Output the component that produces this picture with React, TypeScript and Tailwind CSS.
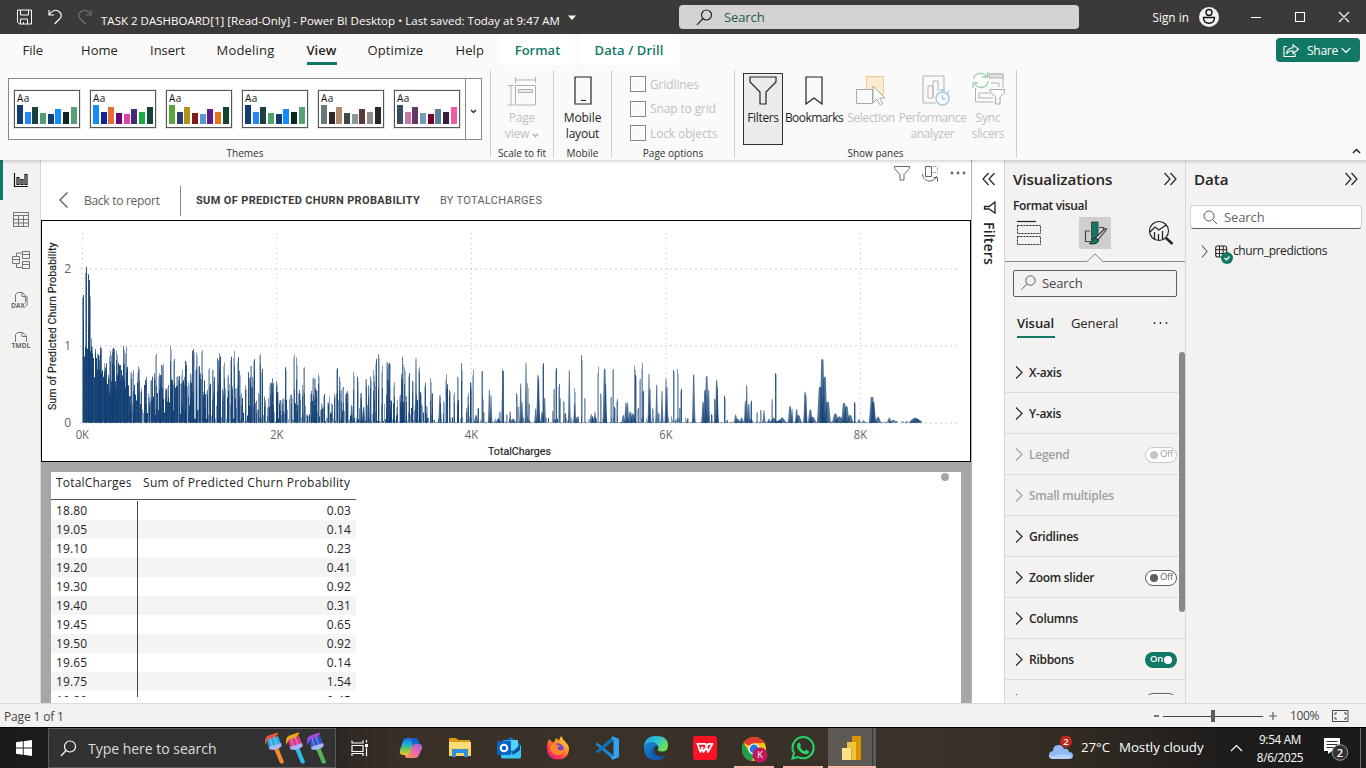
import type { ReactNode } from 'react';

const INK = '#252423';

type IconProps = { w: number; h: number; box?: string; children: ReactNode; className?: string };
function Svg({ w, h, box, children, className = '' }: IconProps) {
  return (
    <svg width={w} height={h} viewBox={box ?? `0 0 ${w} ${h}`} fill="none" className={`block shrink-0 ${className}`}>
      {children}
    </svg>
  );
}

/* ---------- Title bar ---------- */

function TitleBar() {
  return (
    <header className="flex h-[34px] shrink-0 items-center bg-[#3b3a39] text-white">
      <Svg w={80} h={20} className="ml-4">
        <path d="M1.500 3h14v14h-12l-2-2zM4.500 3v5h8V3M4.500 17v-5h7v5M7.500 15v2" stroke="#fff" />
        <path d="M33 3v5h5M33.300 7.500C36 3 40.500 2 43.500 5c2 2 2.300 4.500.5 6.500L38.500 17" stroke="#fff" strokeWidth="1.100" />
        <path d="M75 3v5h-5M74.700 7.500C72 3 67.500 2 64.500 5c-2 2-2.300 4.500-.5 6.500L69.500 17" stroke="#777574" strokeWidth="1.100" />
      </Svg>
      <div className="ml-[5px] w-[460px] whitespace-nowrap pt-[7px] text-[11.500px] leading-4 tracking-[0.010px]">
        TASK 2 DASHBOARD[1] [Read-Only] - Power BI Desktop • Last saved: Today at 9:47 AM
      </div>
      <Svg w={10} h={6} className="ml-[6px] mt-0.5"><path d="M1 .5h8L5 5z" fill="#fff" /></Svg>
      <div className="ml-[102px] flex h-6 w-[400px] items-center rounded-sm bg-[#d4d3d1] text-[#1d5c4d]">
        <Svg w={17} h={17} className="ml-[17px]">
          <circle cx="10.500" cy="6" r="5" stroke="#252423" strokeWidth="1.200" />
          <path d="M7 9.500L1 15.800" stroke="#252423" strokeWidth="1.200" />
        </Svg>
        <span className="ml-[11px] mt-px text-[13px] tracking-[-0.100px]">Search</span>
      </div>
      <span className="ml-[73.500px] mt-px w-[37px] whitespace-nowrap text-[11.700px] tracking-[0.050px]">Sign in</span>
      <Svg w={20} h={20} className="ml-[9.500px]">
        <circle cx="10" cy="10" r="10" fill="#f3f2f1" />
        <circle cx="10" cy="5.500" r="3" stroke="#111" strokeWidth="1.400" />
        <path d="M4.500 10.500h11c0 4-2.500 5.800-5.500 5.800s-5.500-1.800-5.500-5.800z" stroke="#111" strokeWidth="1.400" />
      </Svg>
      <Svg w={100} h={12} className="ml-[31px]">
        <path d="M1 6.500h10M45.500 1.500h9v9h-9zM89 1l10 10M99 1L89 11" stroke="#fff" strokeWidth="1.100" />
      </Svg>
    </header>
  );
}

/* ---------- Menu tabs ---------- */

function MenuTabs() {
  return (
    <nav className="flex h-9 shrink-0 items-start text-[13px] leading-[32px] text-[#252423]">
      <span className="ml-[22.500px] w-[58.500px]">File</span>
      <span className="w-[69px] tracking-[0.050px]">Home</span>
      <span className="w-[66.500px]">Insert</span>
      <span className="w-[90px] tracking-[0.200px]">Modeling</span>
      <span className="relative w-[61px] font-semibold">
        View
        <i className="absolute bottom-[1px] left-0 h-[3px] w-[30px] bg-[#117865]" />
      </span>
      <span className="w-[88px] tracking-[0.140px]">Optimize</span>
      <span className="w-[44.500px] tracking-[0.100px]">Help</span>
      <span className="h-[31px] w-[75px] bg-white text-center font-semibold text-[#117865]">Format</span>
      <span className="ml-1 h-[31px] w-[100px] bg-white text-center font-semibold tracking-[0.100px] text-[#117865]">Data / Drill</span>
      <div className="ml-auto mr-[6px] mt-[4px] flex h-6 w-[84px] items-center rounded bg-[#117865] pl-[7px] text-white">
        <Svg w={17} h={15}>
          <path d="M4 3.500H1v10h11v-3" stroke="#fff" strokeWidth="1.100" />
          <path d="M3.500 11C4 7 6.500 5 10 4.800V1.800l5.500 4.400-5.500 4.300V7.800C7 7.700 5 8.700 3.500 11z" stroke="#fff" strokeWidth="1.100" />
        </Svg>
        <span className="ml-[7px] mt-px w-[31px] text-[12px] tracking-[-0.250px]">Share</span>
        <Svg w={10} h={7} className="ml-[3px]"><path d="M.7 1l4.300 4.500L9.300 1" stroke="#fff" strokeWidth="1.200" /></Svg>
      </div>
    </nav>
  );
}

/* ---------- Ribbon ---------- */

const tallFirst = [19, 12, 17, 11, 10, 15, 12, 17];
const themes: { colors: string[]; heights: number[] }[] = [
  { colors: ['#123d6f', '#2487ff', '#1c403e', '#4fa06e', '#123d6f', '#118dff', '#0c2622', '#55a375'], heights: tallFirst },
  { colors: ['#118dff', '#12239e', '#e66c37', '#6b007b', '#e044a7', '#4a2b78', '#1aab40', '#15443f'], heights: tallFirst },
  { colors: ['#5ba63b', '#2e3d70', '#b1921e', '#7c1b24', '#5b93d3', '#611b8b', '#e6711b', '#17452c'], heights: tallFirst },
  { colors: ['#123d6f', '#2487ff', '#1c403e', '#4fa06e', '#123d6f', '#118dff', '#0c2622', '#55a375'], heights: tallFirst },
  { colors: ['#6a787c', '#332725', '#b08b70', '#3f4848', '#8b9697', '#573b34', '#918c85', '#242827'], heights: tallFirst },
  { colors: ['#354d5e', '#c47ba4', '#68356a', '#7599b7', '#74002e', '#5b809c', '#37203f', '#ed5ca7'], heights: tallFirst },
];

function ThemeCard({ colors, heights }: { colors: string[]; heights: number[] }) {
  return (
    <div className="flex h-[38px] w-[66px] flex-col justify-between border border-[#555] bg-white px-[2px] pb-[3px] shadow-[0_0_0_1px_#e5e5e5]">
      <span className="h-[14px] text-[10px] leading-[15px] tracking-[0.500px] text-[#111]">Aa</span>
      <div className="flex items-end gap-[1.700px]">
        {colors.map((c, i) => (
          <i key={i} className="w-[6px]" style={{ backgroundColor: c, height: heights[i] }} />
        ))}
      </div>
    </div>
  );
}

function RibbonGroup({ label, className, children }: { label: string; className: string; children: ReactNode }) {
  return (
    <section className={`flex h-[88px] flex-col border-r border-[#d2d0ce] ${className}`}>
      <div className="flex h-[76px] shrink-0">{children}</div>
      <div className="h-3 shrink-0 whitespace-nowrap text-center text-[10px] leading-[15px] text-[#323130]">{label}</div>
    </section>
  );
}

function BigButton({ icon, lines, className, muted }: { icon: ReactNode; lines: ReactNode; className: string; muted?: boolean }) {
  return (
    <div className={`flex shrink-0 flex-col items-center whitespace-nowrap text-center text-[12px] leading-4 ${muted ? 'text-[#c2c0be]' : 'text-[#252423]'} ${className}`}>
      <div className="flex h-8 items-center">{icon}</div>
      <div className="mt-[5px] flex flex-col items-center">{lines}</div>
    </div>
  );
}

function CheckRow({ children }: { children: ReactNode }) {
  return (
    <div className="flex h-4 items-center gap-1 whitespace-nowrap text-[12px] tracking-[-0.120px] text-[#c2c0be]">
      <i className="size-4 border border-[#8a8886] bg-[#fafafa]" />
      <span className="mt-px">{children}</span>
    </div>
  );
}

function Ribbon() {
  return (
    <div className="flex h-[90px] shrink-0">
      <RibbonGroup label="Themes" className="w-[491px]">
        <div className="ml-2 mt-2 flex h-[62px] w-[474px] border border-[#8a8886] bg-white">
          <div className="flex w-[457px] items-center gap-[10px] border-r border-[#8a8886] pl-[5px]">
            {themes.map((t, i) => <ThemeCard key={i} {...t} />)}
          </div>
          <div className="flex flex-1 items-center justify-center">
            <Svg w={7} h={5} className="mt-1"><path d="M1 1l2.500 2.500L6 1" stroke="#323130" strokeWidth="1.500" /></Svg>
          </div>
        </div>
      </RibbonGroup>
      <RibbonGroup label="Scale to fit" className="w-[63px]">
        <BigButton
          muted
          className="w-[62px] pt-[4px]"
          icon={
            <Svg w={30} h={32}>
              <path d="M8.500 3v6M28.500 3v6M8.500 6h20M1 11.500h6M1 31h6M4 12v19M8.500 11.500h20V31h-20z" stroke="#b3b1af" />
              <path d="M11.500 15.500h14v3h-14z" stroke="#b3b1af" fill="#ececec" />
            </Svg>
          }
          lines={<><span className="-mt-px tracking-[-0.200px]">Page</span><span className="flex items-center gap-[3px] tracking-[-0.200px]">view <Svg w={7} h={5} className="mt-0.5"><path d="M1 1l2.500 2.500L6 1" stroke="#aaa" strokeWidth="1.500" /></Svg></span></>}
        />
      </RibbonGroup>
      <RibbonGroup label="Mobile" className="w-[58px]">
        <BigButton
          className="w-[57px] pt-[4px]"
          icon={<Svg w={18} h={29}><path d="M1 1h16v27H1zM7 24.500h5" stroke={INK} strokeWidth="1.200" /></Svg>}
          lines={<><span className="-mt-px tracking-[-0.100px]">Mobile</span><span className="tracking-[-0.200px]">layout</span></>}
        />
      </RibbonGroup>
      <RibbonGroup label="Page options" className="w-[123px]">
        <div className="ml-[18px] mt-[6px] flex flex-col gap-[8.700px]">
          <CheckRow>Gridlines</CheckRow>
          <CheckRow>Snap to grid</CheckRow>
          <CheckRow>Lock objects</CheckRow>
        </div>
      </RibbonGroup>
      <RibbonGroup label="Show panes" className="w-[282px]">
        <BigButton
          className="ml-2 mt-[3px] h-[72px] w-10 border border-[#323130] bg-[#ebebeb]"
          icon={<Svg w={28} h={29}><path d="M1 1h26v5L17 16v12h-6V16L1 6z" stroke={INK} strokeWidth="1.200" /></Svg>}
          lines={<span className="-mt-px tracking-[-0.350px]">Filters</span>}
        />
        <BigButton
          className="w-[62px] pt-[4px]"
          icon={<Svg w={18} h={29}><path d="M1 1h16v27l-8-6-8 6z" stroke={INK} strokeWidth="1.200" /></Svg>}
          lines={<span className="-mt-px tracking-[-0.550px]">Bookmarks</span>}
        />
        <BigButton
          muted
          className="w-[52px] pt-[4px]"
          icon={
            <Svg w={30} h={32}>
              <path d="M10.500 2.500h17v18h-17z" fill="#fbecd0" stroke="#f0c898" />
              <path d="M.5 15.500h16v14H.5z" fill="#fafafa" stroke="#a9a9a9" />
              <path d="M17 12v17l4-4 3 6 2.500-1.500L23.500 24H29z" fill="#fff" stroke="#a9a9a9" />
            </Svg>
          }
          lines={<span className="-mt-px tracking-[-0.350px]">Selection</span>}
        />
        <BigButton
          muted
          className="w-[71px] pt-[4px]"
          icon={
            <Svg w={28} h={32} className="ml-1.5">
              <path d="M14 29H1V2h21v14M6 24V12h5v12zM11 24V7h5v10" stroke="#b3b1af" />
              <circle cx="20.500" cy="24.500" r="6.500" stroke="#a3cbe5" strokeWidth="1.500" fill="#fafafa" />
              <path d="M20.500 18v-2M18 16h5M20.500 21v4h3M25.500 19l1.500-2" stroke="#a3cbe5" strokeWidth="1.300" />
            </Svg>
          }
          lines={<><span className="-mt-px tracking-[-0.450px]">Performance</span><span className="tracking-[-0.350px]">analyzer</span></>}
        />
        <BigButton
          muted
          className="w-[40px] pt-[4px]"
          icon={
            <Svg w={33} h={34} className="-mt-1">
              <path d="M3.500 17v14h18M17 3h14v14M7 22h11M7 27h14M7 22v5M19 12h8v4" stroke="#b3b1af" />
              <path d="M17 3h14v4H17z" fill="#e1e1e1" stroke="#b3b1af" />
              <path d="M1.500 8a7 7 0 0 1 13-2M16 10A7 7 0 0 1 3 13M15.500 1v5h-5M1 17v-5h5" stroke="#9ccfaa" strokeWidth="1.300" />
              <path d="M18.500 18.500h14v3L28 26v7h-4.500v-7l-5-4.500z" fill="#fafafa" stroke="#a9a9a9" />
            </Svg>
          }
          lines={<><span className="-mt-px tracking-[-0.200px]">Sync</span><span className="tracking-[-0.350px]">slicers</span></>}
        />
      </RibbonGroup>
      <Svg w={9} h={6} className="ml-auto mr-[5px] mt-[78px]"><path d="M1 5l3.500-3.500L8 5" stroke="#252423" strokeWidth="1.500" /></Svg>
    </div>
  );
}

/* ---------- View rail ---------- */

function Rail() {
  return (
    <aside className="flex w-[41px] shrink-0 border-r border-[#d8d6d4] bg-[#f3f2f1]">
      <i className="h-10 w-[3px] bg-[#117865]" />
      <Svg w={37} h={200} box="3 160 37 200">
        <path d="M14.500 173v13.500H28" stroke="#111" strokeWidth="1.200" />
        <path d="M17 177.500h2v7h-2zM21 179.500h2v5h-2zM25 174.500h2v10h-2z" stroke="#111" strokeWidth="1.200" />
        <g stroke="#777573">
          <path d="M13.500 212.500h15v14h-15zM13.500 215.500h15M13.500 219.500h15M13.500 223h15M18.500 215v11.500M23.500 215v11.500" />
          <path d="M12.500 256.500h7v7h-7zM12.500 259.500h7M22.500 251.500h7v7h-7zM22.500 254.500h7M22.500 261.500h7v7h-7zM22.500 264.500h7M16.500 256v-3h6M16.500 264v3.500h6" />
          <path d="M15.500 302v-7.500l2-2h5l3 3.500v7M22 293v3.500h3.500M27 296v9l-2 2h-3" />
          <path d="M15.500 342v-7.500l2-2h5l4 3.500v6M22 333v3.500h4" />
        </g>
        <text x="11" y="308" fontSize="7" fontWeight="700" fill="#6a6866" stroke="#f3f2f1" strokeWidth="1.500" paintOrder="stroke" textLength="14">DAX</text>
        <text x="11.500" y="347.500" fontSize="7" fontWeight="700" fill="#6a6866" stroke="#f3f2f1" strokeWidth="1.500" paintOrder="stroke" textLength="19">TMDL</text>
      </Svg>
    </aside>
  );
}

/* ---------- Chart ---------- */

/* Peaks are [x, y] or [x, y, half width]; three units make one CSS pixel and the baseline is y = 788. */
type Peak = [number, number, number?];
const BASE = 788;
const peaks: Peak[] = [
  [251, 405], [260, 320], [266, 343], [268, 360], [273, 535], [278, 620], [285, 567], [292, 580], [296, 590], [301, 562], [304, 565], [313, 610], [316, 622], [320, 610],
  [325, 645], [331, 572], [337, 575], [340, 563], [343, 567], [348, 572], [352, 642], [361, 615], [369, 558], [373, 610], [380, 560], [383, 620], [390, 707],
  [395, 635], [400, 630], [404, 700], [415, 620], [419, 628], [425, 685], [436, 660], [440, 650], [447, 710], [453, 660], [458, 650], [462, 640],
  [468, 580], [477, 640], [480, 645], [485, 614], [489, 612], [495, 685], [500, 690], [506, 675], [511, 558], [514, 655], [518, 660], [523, 597], [524, 670], [533, 648],
  [538, 648], [543, 670], [548, 630], [552, 650], [557, 603], [560, 615], [566, 665], [571, 640], [577, 572], [580, 567], [588, 578], [589, 620], [597, 618], [602, 640],
  [606, 570], [610, 695], [616, 703], [622, 690], [628, 625], [636, 630], [642, 652], [652, 595], [656, 600], [659, 580], [662, 590], [668, 688], [672, 607], [684, 645],
  [693, 590], [696, 688], [702, 573], [705, 685], [714, 592], [717, 632], [723, 700], [735, 677], [745, 637], [750, 652], [754, 617], [758, 650], [763, 598],
  [769, 722], [776, 700], [781, 583], [787, 627], [792, 710], [803, 742], [810, 667], [815, 670], [818, 655], [821, 670], [829, 662], [832, 696], [840, 720], [846, 718], [850, 715],
  [855, 622], [875, 705], [883, 583], [890, 592], [893, 735], [899, 690], [908, 675], [912, 622], [921, 768], [934, 693], [940, 652], [943, 655], [947, 685], [950, 690], [954, 642],
  [965, 730], [974, 702], [985, 728], [993, 730], [1003, 700], [1011, 625], [1019, 650], [1025, 690], [1030, 680], [1040, 698], [1043, 693],
  [1060, 635], [1055, 735, 4], [1073, 650], [1083, 697, 4], [1091, 740, 4], [1100, 657], [1106, 675, 3], [1112, 650], [1119, 630], [1124, 665], [1129, 597], [1134, 583], [1147, 617], [1162, 607],
  [1169, 609], [1165, 613], [1172, 720], [1184, 667], [1180, 730], [1158, 705], [1191, 740], [1200, 705], [1205, 640, 3], [1208, 590], [1213, 622], [1220, 708], [1228, 640], [1237, 663], [1248, 594, 3], [1257, 622],
  [1261, 695], [1276, 668], [1280, 738], [1292, 655], [1297, 700], [1320, 705, 4], [1329, 723], [1338, 643], [1343, 673], [1347, 690], [1364, 697], [1371, 650], [1375, 720], [1385, 610], [1399, 745], [1404, 700], [1411, 667],
  [1412, 680], [1420, 630], [1428, 765, 5], [1435, 745], [1446, 633], [1446, 710], [1451, 755], [1468, 688, 3], [1473, 705, 3], [1495, 775, 6], [1499, 755], [1508, 627, 3], [1510, 633], [1520, 763], [1531, 755], [1540, 775, 6], [1549, 700], [1555, 740], [1562, 670, 3],
  [1566, 725, 3], [1578, 607, 3], [1583, 670], [1587, 730], [1607, 745, 3], [1614, 645, 4], [1616, 655, 3], [1626, 755, 4], [1631, 610], [1634, 712, 3], [1656, 752], [1664, 687], [1668, 623], [1678, 672], [1681, 715], [1690, 722], [1697, 760],
  [1708, 630, 3], [1722, 685], [1724, 730, 3], [1732, 770, 4], [1743, 586], [1752, 714], [1773, 763], [1778, 768, 4], [1785, 755, 3], [1796, 620], [1801, 700], [1814, 625, 5], [1817, 670, 3], [1835, 710], [1839, 627], [1844, 740], [1853, 718],
  [1870, 765, 4], [1878, 727, 4], [1883, 727, 3], [1891, 755, 6], [1899, 760, 6], [1903, 617], [1906, 645], [1915, 743], [1922, 657], [1927, 610], [1930, 693], [1947, 640, 3], [1950, 685, 3], [1957, 745], [1970, 673, 3], [1974, 760], [1986, 692, 3],
  [1998, 655, 3], [2001, 680, 3], [2019, 630], [2031, 627], [2038, 743], [2044, 687], [2062, 775], [2081, 643, 4], [2061, 780],
  [2109, 725, 4], [2115, 690, 5], [2120, 648, 5], [2126, 688, 3], [2134, 763], [2143, 717], [2150, 660, 4], [2152, 680, 3], [2172, 707], [2181, 780], [2207, 763, 4], [2213, 775, 6], [2225, 772, 5], [2240, 675, 3], [2236, 723, 3], [2246, 732, 4],
  [2255, 722, 2], [2253, 775, 5], [2271, 757], [2280, 750], [2292, 750, 3], [2307, 775, 4], [2318, 717, 2], [2321, 773, 8], [2326, 640, 2], [2337, 780, 9], [2346, 772, 10], [2370, 738, 5], [2376, 745, 3], [2390, 747, 4], [2396, 765, 7],
  [2415, 695, 4], [2418, 703, 3], [2431, 748, 6], [2438, 770, 9], [2461, 680, 9], [2467, 597, 7], [2474, 650, 7], [2483, 725, 8], [2506, 760, 8], [2518, 769, 12], [2532, 728, 7], [2539, 738, 8], [2550, 765, 8], [2563, 727, 2], [2577, 777, 3], [2591, 780, 3],
  [2616, 710, 8], [2620, 725, 7], [2634, 770, 7], [2668, 772, 5], [2680, 780, 12], [2720, 784, 14], [2745, 773, 15], [2751, 776, 14],
];

function noise(n: number) {
  const v = Math.sin(n * 12.9898) * 43758.5453;
  return v - Math.floor(v);
}

/* Floor of small values under the peaks, denser where the totals are low. */
const undergrowth = Array.from({ length: 805 }, (_, i) => {
  const x = 249 + i * 3;
  const r = noise(i + 1);
  let h: number;
  if (x < 274) h = 195 + r * 60;
  else if (x < 305) h = 120 + r * 90;
  else if (x < 386) h = 85 + r * 95;
  else if (x < 560) h = 20 + r * 115;
  else if (x < 720) h = 12 + r * r * 120;
  else if (x < 1050) h = 4 + r * r * 85;
  else if (x < 1300) h = 3 + r ** 3 * 75;
  else if (x < 2120) h = r > 0.7 ? 2 + (r - 0.7) * 60 : 2;
  else h = r > 0.3 && x < 2700 ? 2.5 : 1;
  return { x, h, dark: x < 386 || noise(i + 400) > (x < 700 ? 0.45 : 0.72) };
});

function snap(x: number) {
  return Math.floor(x / 3) * 3;
}

function peakPath([x, y, hw = 2.6]: Peak) {
  if (hw < 3) return `M${snap(x)} ${BASE}V${y}h3V${BASE}z`;
  return `M${x - hw - 2} ${BASE}Q${x - hw} ${BASE - 8} ${x - hw * 0.5} ${y + 4}Q${x} ${y - 5} ${x + hw * 0.5} ${y + 4}Q${x + hw} ${BASE - 8} ${x + hw + 2} ${BASE}z`;
}

function Chart() {
  return (
    <div className="h-[242px] w-[930px] border border-black bg-white">
      <svg width="928" height="240" viewBox="126 183 2784 720" className="block">
        <g stroke="#e6e6e6" strokeWidth="6" strokeDasharray="6 9">
          <path d="M240 327H2875M240 558H2875M240 789H2875" />
        </g>
        <g stroke="#c4c4c4" strokeWidth="3" strokeDasharray="3 12">
          <path d="M247.500 219V788M830.500 219V788M1414.500 219V788M1998.500 219V788M2581.500 219V788" />
        </g>
        {peaks.filter((p) => (p[2] ?? 0) < 3).map((p, i) => {
          const side = noise(i + 33) > 0.5 ? 3 : -3;
          const y = p[1] + (BASE - p[1]) * noise(i + 7) * 0.12;
          return <rect key={i} x={snap(p[0]) + side} y={y} width="3" height={BASE - y} fill="#123f73" opacity={p[0] < 386 ? 0.5 : 0.36} />;
        })}
        {peaks.map((p, i) => {
          const wide = (p[2] ?? 0) >= 3;
          const first = p[0] < 270;
          const shade = wide ? 0.74 : first ? 0.9 : [0.56, 0.86, 0.7, 0.5][i % 4];
          return <path key={i} d={peakPath(p)} fill="#123f73" opacity={shade} />;
        })}
        {peaks.filter((p) => p[0] < 1420).map((p, i) => {
          const h = (BASE - p[1]) * (0.4 + noise(i + 90) * 0.5);
          return <rect key={i} x={snap(p[0])} y={BASE - h} width="3" height={h} fill="#123f73" opacity="0.7" />;
        })}
        {undergrowth.map((u, i) => (
          <rect key={i} x={u.x} y={BASE - u.h} width="3" height={u.h} fill="#123f73" opacity={u.dark ? 0.95 : 0.5} />
        ))}
        <g fontSize="36" fill="#666463" fontFamily="'Open Sans'">
          <text x="213" y="338" textAnchor="end">2</text>
          <text x="213" y="569" textAnchor="end">1</text>
          <text x="213" y="800" textAnchor="end">0</text>
          {['0K', '2K', '4K', '6K', '8K'].map((k, i) => (
            <text key={k} x={247 + i * 583.6} y="837" textAnchor="middle" textLength="40" lengthAdjust="spacingAndGlyphs">{k}</text>
          ))}
        </g>
        <g fontSize="32" fill="#252423" stroke="#252423" strokeWidth=".5" fontFamily="Roboto">
          <text x="1464" y="885" textLength="189">TotalCharges</text>
          <text transform="translate(169 750) rotate(-90)" textLength="503">Sum of Predicted Churn Probability</text>
        </g>
      </svg>
    </div>
  );
}

function ReportHeader() {
  return (
    <div className="relative flex h-[60px] shrink-0 items-center pt-[22px]">
      <Svg w={11} h={18} className="ml-[17px] -mt-0.5"><path d="M9.500 1.500L2 9l7.500 7.500" stroke="#605e5c" strokeWidth="1.300" /></Svg>
      <span className="ml-[15px] w-[96px] whitespace-nowrap text-[12px] tracking-[-0.280px] text-[#605e5c]">Back to report</span>
      <i className="h-[30px] w-px bg-[#8a8886]" />
      <span className="ml-[15px] w-[244px] whitespace-nowrap font-['Roboto'] text-[11px] font-bold tracking-[0.350px] text-[#3b3a39]">SUM OF PREDICTED CHURN PROBABILITY</span>
      <span className="whitespace-nowrap font-['Roboto'] text-[11px] tracking-[0.300px] text-[#605e5c]">BY TOTALCHARGES</span>
      <Svg w={74} h={18} className="absolute right-[4px] top-[5px]">
        <path d="M1.500 1.500h15v2l-5.500 6v5.500H7V9.500L1.500 3.500z" stroke="#666463" />
        <path d="M32.500 1.500h6v10h-6z" stroke="#666463" />
        <path d="M40 1.500h4.500v6H40" stroke="#8a8886" strokeDasharray="1 1" />
        <path d="M29.500 9c.5 5 4 7.500 8 7 3.500-.5 5.500-2.500 6-5M40.500 12.500h4v4" stroke="#666463" />
        <g fill="#666463"><circle cx="59" cy="8" r="1.400" /><circle cx="65" cy="8" r="1.400" /><circle cx="71" cy="8" r="1.400" /></g>
      </Svg>
    </div>
  );
}

const tableRows = [
  ['18.80', '0.03'], ['19.05', '0.14'], ['19.10', '0.23'], ['19.20', '0.41'], ['19.30', '0.92'], ['19.40', '0.31'],
  ['19.45', '0.65'], ['19.50', '0.92'], ['19.65', '0.14'], ['19.75', '1.54'], ['19.80', '0.45'],
];

function DataTable() {
  return (
    <div className="flex min-h-0 flex-1 bg-[#a6a6a6] px-[10px] pt-[10px]">
      <div className="relative w-[910px] bg-white">
        <div className="h-[225px] w-[305px] overflow-hidden text-[12px] text-[#252423]">
          <div className="flex h-[28px] items-center whitespace-nowrap border-b border-[#555] pb-[6px]">
            <span className="w-[92px] pl-[5px] tracking-[0.190px]">TotalCharges</span>
            <span className="tracking-[0.310px]">Sum of Predicted Churn Probability</span>
          </div>
          <div className="pt-[1px]">
            {tableRows.map(([a, b], i) => (
              <div key={a} className={`flex h-[19px] items-center ${i % 2 ? 'bg-[#f4f4f4]' : 'bg-white'}`}>
                <span className="flex h-[20px] w-[87px] items-center border-r border-[#444] pl-[5px] tracking-[0.100px]">{a}</span>
                <span className="flex-1 pr-[5px] text-right tracking-[0.100px]">{b}</span>
              </div>
            ))}
          </div>
        </div>
        <i className="absolute right-[12px] top-[1px] size-[8px] rounded-full bg-[#a6a6a6]" />
      </div>
    </div>
  );
}

/* ---------- Side panes ---------- */

function FiltersPane() {
  return (
    <aside className="flex w-[33px] shrink-0 flex-col items-center border-l border-[#b3b0ad] bg-white">
      <Svg w={14} h={14} className="ml-px mt-[12px]"><path d="M6.500 1L1 7l5.500 6M12.500 1L7 7l5.500 6" stroke="#252423" strokeWidth="1.200" /></Svg>
      <Svg w={14} h={13} className="ml-1 mt-[15px]"><path d="M12 1v11l-6-4H1.500V5.500H6z" stroke="#252423" strokeWidth="1.300" /></Svg>
      <span className="ml-px mt-[8px] text-[14px] font-semibold leading-4 tracking-[0.200px] text-[#252423] [writing-mode:vertical-rl]">Filters</span>
    </aside>
  );
}

function Toggle({ state }: { state: 'on' | 'off' | 'disabled' }) {
  if (state === 'on')
    return (
      <span className="flex h-4 w-8 items-center justify-between rounded-full bg-[#117865] pl-[5px] pr-[5px] text-[9.500px] font-semibold tracking-[-0.300px] text-white">
        On<i className="size-2 rounded-full bg-white" />
      </span>
    );
  const off = state === 'off';
  return (
    <span className={`flex h-4 w-8 items-center gap-[2px] rounded-full border bg-white pl-[4px] text-[9.500px] tracking-[-0.300px] ${off ? 'border-[#605e5c] text-[#605e5c]' : 'border-[#c8c6c4] text-[#a19f9d]'}`}>
      <i className={`size-2 rounded-full ${off ? 'bg-[#605e5c]' : 'bg-[#c8c6c4]'}`} />Off
    </span>
  );
}

const cards: { label: string; muted?: boolean; toggle?: 'on' | 'off' | 'disabled' }[] = [
  { label: 'X-axis' }, { label: 'Y-axis' }, { label: 'Legend', muted: true, toggle: 'disabled' }, { label: 'Small multiples', muted: true },
  { label: 'Gridlines' }, { label: 'Zoom slider', toggle: 'off' }, { label: 'Columns' }, { label: 'Ribbons', toggle: 'on' }, { label: 'Line', toggle: 'off' },
];

function DoubleChevron() {
  return <Svg w={14} h={14}><path d="M1.500 1L7 7l-5.500 6M7.500 1L13 7l-5.500 6" stroke="#252423" strokeWidth="1.200" /></Svg>;
}

function VisualizationsPane() {
  return (
    <aside className="flex w-[182px] shrink-0 flex-col border-x border-[#d8d6d4] bg-[#f3f2f1] text-[#252423]">
      <div className="flex h-[38px] items-center justify-between pl-2 pr-[8px]">
        <span className="text-[15.200px] font-semibold tracking-[-0.100px]">Visualizations</span>
        <DoubleChevron />
      </div>
      <div className="h-[19px] pl-2 text-[12px] font-semibold leading-4 tracking-[-0.350px]">Format visual</div>
      <svg width="180" height="45" viewBox="1005 217 180 45" fill="none" className="block shrink-0">
        <path d="M1017 221.500h19" stroke="#252423" strokeWidth="1.200" />
        <path d="M1017.500 225.500h23v8h-23zM1017.500 236.500h23v8h-23z" stroke="#252423" strokeDasharray="2 1" />
        <rect x="1079" y="217" width="32" height="32" rx="1" fill="#d0cecc" />
        <path d="M1090 231h-4.500v10.500h6M1099 227.500h4.500v2" stroke="#444" strokeWidth="1.200" />
        <path d="M1091.500 222h6.500v18h-6.500z" fill="#117865" stroke="#333" strokeWidth=".8" />
        <path d="M1106.500 229.500l-9 11-2.500-2.300 9.500-9.200q2-1.200 2 .5z" fill="#d0cecc" stroke="#333" strokeWidth="1.100" />
        <path d="M1095.500 238c2 .5 3 1.500 3 3-1 2.500-5 3.500-9.500 2.500 2-.5 2.500-1.500 3-3 .5-1.500 1.500-2.300 3.500-2.500z" fill="#117865" stroke="#222" />
        <circle cx="1159" cy="231" r="9.500" stroke="#252423" strokeWidth="1.200" />
        <path d="M1150 232l5-5 4 3 7-5M1154.500 232v7M1158.500 234v6M1162.500 231v8" stroke="#252423" strokeWidth="1.300" />
        <path d="M1166 238l6.500 6" stroke="#252423" strokeWidth="2.500" />
        <path d="M1005 261.500h82l8-7.500 8 7.500h82" stroke="#8a8886" />
      </svg>
      <div className="mx-2 mt-2 flex h-[27px] shrink-0 items-center rounded-[2px] border border-[#605e5c] bg-[#f3f2f1] text-[13px] text-[#484644]">
        <Svg w={15} h={15} className="-mt-0.5 ml-[7px]"><circle cx="9.500" cy="5.500" r="4.700" stroke="#605e5c" /><path d="M6 9l-5.500 5.500" stroke="#605e5c" /></Svg>
        <span className="ml-[6px] mt-px tracking-[-0.100px]">Search</span>
      </div>
      <div className="flex h-[55px] shrink-0 items-start pl-[12px] pt-[15px] text-[13px] leading-[22px]">
        <span className="h-[26px] w-[38px] border-b-2 border-[#117865] font-semibold tracking-[-0.050px]">Visual</span>
        <span className="ml-4 w-[82px] tracking-[-0.080px]">General</span>
        <Svg w={15} h={4} className="mt-[9px]"><g fill="#252423"><circle cx="1.500" cy="2" r=".9" /><circle cx="7.500" cy="2" r=".9" /><circle cx="13.500" cy="2" r=".9" /></g></Svg>
      </div>
      <div className="relative h-[343px] overflow-hidden">
        {cards.map((c) => (
          <div key={c.label} className={`flex h-[41px] items-center border-b border-[#dddbd9] pl-[10px] pr-2 pt-px ${c.muted ? 'text-[#a19f9d]' : ''}`}>
            <Svg w={9} h={13} className="-mt-px"><path d="M1 .5l6 6-6 6" stroke="currentColor" strokeWidth="1.200" /></Svg>
            <span className="ml-[5px] flex-1 text-[12px] font-semibold tracking-[-0.270px]">{c.label}</span>
            {c.toggle && <Toggle state={c.toggle} />}
          </div>
        ))}
        <i className="absolute right-0 top-0 h-[260px] w-[6px] rounded-full bg-[#8a8886]" />
      </div>
    </aside>
  );
}

function DataPane() {
  return (
    <aside className="flex flex-1 flex-col bg-[#f3f2f1] text-[#252423]">
      <div className="flex h-[38px] items-center justify-between pl-2 pr-[8px]">
        <span className="text-[15.200px] font-semibold tracking-[-0.100px]">Data</span>
        <DoubleChevron />
      </div>
      <div className="mx-1 mt-[7px] flex h-6 items-center rounded border border-[#d1d1d1] border-b-[#605e5c] bg-white text-[13px] text-[#666463]">
        <Svg w={15} h={15} className="ml-3"><circle cx="6" cy="6" r="5" stroke="#605e5c" /><path d="M9.700 9.700l4.500 4.500" stroke="#605e5c" /></Svg>
        <span className="ml-[6px] mt-px tracking-[-0.100px]">Search</span>
      </div>
      <div className="mt-[10px] flex h-6 items-center pl-[15px] text-[12px]">
        <Svg w={7} h={13}><path d="M1 .5l5 6-5 6" stroke="#605e5c" strokeWidth="1.100" /></Svg>
        <Svg w={18} h={19} className="ml-[7px] mt-1.5">
          <rect x=".7" y="1" width="11" height="11" rx="2" stroke="#252423" strokeWidth="1.100" />
          <path d="M.7 4.700h11M.7 8.500h11M4.500 1v11M8.200 1v11" stroke="#252423" />
          <circle cx="12" cy="13" r="6" fill="#117865" />
          <path d="M9.500 13l2 1.800 3-3.300" stroke="#fff" strokeWidth="1.500" />
        </Svg>
        <span className="tracking-[-0.390px]">churn_predictions</span>
      </div>
    </aside>
  );
}

/* ---------- Status bar ---------- */

function StatusBar() {
  return (
    <footer className="flex h-6 shrink-0 items-center border-t border-[#dddbd9] bg-[#f3f2f1] text-[12px] text-[#484644]">
      <span className="ml-[4px] mt-[3px] tracking-[-0.150px]">Page 1 of 1</span>
      <Svg w={124} h={12} className="ml-auto mt-px">
        <path d="M1 6h5" stroke="#484644" strokeWidth="1.500" />
        <path d="M10 6.500h100" stroke="#484644" /><path d="M60 0v12" stroke="#605e5c" strokeWidth="4" />
        <path d="M116 6h8M120 2v8" stroke="#605e5c" strokeWidth="1.200" />
      </Svg>
      <span className="ml-[13px] w-[30px] tracking-[-0.350px]">100%</span>
      <Svg w={17} h={12} className="ml-3 mr-[17px] mt-px">
        <path d="M.5.5h15.500v11H.5z" stroke="#484644" /><path d="M5 3H3v2M3 7v2h2M12 3h2v2M14 7v2h-2" stroke="#484644" />
      </Svg>
    </footer>
  );
}

/* ---------- Taskbar ---------- */

function Brush({ x, tip, bristle, handle }: { x: number; tip: string; bristle: string; handle: string }) {
  return (
    <g transform={`translate(${x} 0)`}>
      <path d="M0 9q0-5 5-6L12 .5q2 0 .5 2L10 6 2 9.500 0 13z" fill={tip} />
      <path d="M2 8l11-4 3 8L4 16z" fill={bristle} />
      <path d="M5 6.500l2.500 8M9 5l3 8" stroke="#fff" strokeOpacity=".4" />
      <path d="M4 15l12-4 .8 3-4.300 3.500-3 .5-4.800-.5z" fill="#a9b6f5" />
      <path d="M9.500 18l4-1.500L19 30q-1 2.500-4 1z" fill={handle} />
    </g>
  );
}

function TaskCell({ children, running }: { children: ReactNode; running?: boolean }) {
  return (
    <div className="relative flex h-full w-[49px] items-center justify-center">
      {children}
      {running && <i className="absolute bottom-0 left-[5px] h-[2px] w-10 bg-[#ffb9ae]" />}
    </div>
  );
}

function Taskbar() {
  return (
    <div className="flex h-[41px] shrink-0 items-center border-t border-black bg-[linear-gradient(90deg,#1c1b1b_0%,#272321_22%,#3a3027_30%,#39322a_68%,#352e24_76%,#1e1c1b_90%,#1b1b1b_100%)] text-white">
      <Svg w={16} h={16} className="ml-4">
        <path d="M0 2.300L6.800 1.300v6.300H0zM7.700 1.200L16 0v7.600H7.700zM0 8.500h6.800v6.300L0 13.800zM7.700 8.500H16V16l-8.300-1.200z" fill="#fff" />
      </Svg>
      <div className="ml-4 flex h-10 w-[288px] items-center border border-[#5d5b5a] bg-[#333232]">
        <Svg w={17} h={17} className="ml-[11px]"><circle cx="10" cy="6.500" r="5.500" stroke="#fff" strokeWidth="1.200" /><path d="M6 10.500L1 16" stroke="#fff" strokeWidth="1.200" /></Svg>
        <span className="ml-[11px] text-[14px] tracking-[-0.020px] text-[#dcdcdc]">Type here to search</span>
        <Svg w={64} h={33} className="ml-auto mr-[6px]">
          <Brush x={0} tip="#e5543f" bristle="#2ea8df" handle="#f58d2e" />
          <Brush x={21} tip="#e8a713" bristle="#db3a88" handle="#2cbcec" />
          <Brush x={42} tip="#a14bdc" bristle="#3054c9" handle="#52b654" />
        </Svg>
      </div>
      <div className="flex w-[50px] justify-center pr-0.5">
        <Svg w={18} h={16}><path d="M1 .5v2.500h11V.5M1 5.500h11v6H1zM1 16v-2.500h11V16M15.500 0v2.500M15.500 7.500V16" stroke="#fff" strokeWidth="1.200" /><path d="M14 4h3v3h-3z" fill="#fff" /></Svg>
      </div>
      <TaskCell>
        <Svg w={24} h={24} box="0 0 24 24">
          <defs>
            <linearGradient id="cpA" x1="0" y1="0" x2="0" y2="1"><stop stopColor="#1a6fe0" /><stop offset=".35" stopColor="#1ca8dc" /><stop offset=".65" stopColor="#6dc45b" /><stop offset="1" stopColor="#f6c422" /></linearGradient>
            <linearGradient id="cpB" x1="1" y1="0" x2="0" y2="1"><stop stopColor="#9a63e0" /><stop offset=".5" stopColor="#ee6aa5" /><stop offset="1" stopColor="#f79a4e" /></linearGradient>
          </defs>
          <path d="M8 2h8q2.500 0 3.500 3l1 3h-4q-2 0-2.700 2l-2 6Q11 19 8 19H4Q0 19 1 14L4 5q1-3 4-3z" fill="url(#cpA)" />
          <path d="M16 22H8q-1.500 0-2-2l-.3-1H8q2.300 0 3-2l2-6.500Q13.800 8 16.500 8H20q4 0 3 4.500l-3 6.500q-1 3-4 3z" fill="url(#cpB)" />
          <path d="M12 2h4q2.500 0 3.500 3l1 3h-4q-2 0-2.700 2z" fill="#1452c6" opacity=".75" />
        </Svg>
      </TaskCell>
      <TaskCell>
        <Svg w={24} h={22}>
          <path d="M1 2q0-1 1-1h6l2 2h12v4H1z" fill="#dd9b0f" /><path d="M1 5h22v14H1z" fill="#ffd45f" />
          <path d="M1 5h22v6H1z" fill="#ffdc78" /><path d="M4 12h16v8h-4v-4H8v4H4z" fill="#2e91dd" />
        </Svg>
      </TaskCell>
      <TaskCell>
        <Svg w={24} h={24}>
          <path d="M4 8L14 1l9 7v12q0 2-2 2H6q-2 0-2-2z" fill="#1170bd" />
          <path d="M6 4h14v11H6z" fill="#29a5e5" /><path d="M14 4h7v7l-7 4z" fill="#57d2f5" />
          <path d="M4 13l11 4 9-8v12q0 1.500-2 1.500H6q-2 0-2-2z" fill="#38c5f3" /><path d="M15 17l8-8v5l-7 5z" fill="#0c4d99" />
          <rect y="5" width="14" height="14" rx="1.500" fill="#0b64c0" /><circle cx="7" cy="12" r="3.300" stroke="#fff" strokeWidth="2" />
        </Svg>
      </TaskCell>
      <TaskCell>
        <Svg w={24} h={24}>
          <defs><linearGradient id="ff" x1="1" y1="0" x2=".2" y2="1"><stop stopColor="#fff14a" /><stop offset=".4" stopColor="#ff9b27" /><stop offset=".75" stopColor="#ff3a4c" /><stop offset="1" stopColor="#e11a8c" /></linearGradient></defs>
          <path d="M2 5q1-1 1.500-2 1 3 4 3.500Q10 4 10 2q2 1 3 3 0-3 2.500-5 .5 3 4 6 4 4 3.500 8-1 9.500-11 9.500T1 14Q.5 9 2 5z" fill="url(#ff)" />
          <circle cx="12" cy="13" r="5.700" fill="#7048dc" /><path d="M5 9q4-3 6 0 3 0 3 1-3 1-3 2 4 5 8 0-1 7-7 7t-8-6z" fill="#ff8824" />
        </Svg>
      </TaskCell>
      <TaskCell>
        <Svg w={24} h={24}>
          <path d="M2 6.500L18 19v4.500L.7 8.500z" fill="#1788d5" /><path d="M.7 15.500L18 .5V5L3 17.500z" fill="#0c71b8" />
          <path d="M17.500.3L24 3v18l-6.500 2.700-1.500-2 2.500-2V4.300l-2.500-2z" fill="#30a5f3" />
        </Svg>
      </TaskCell>
      <TaskCell>
        <Svg w={24} h={24}>
          <defs>
            <linearGradient id="edA" x1="0" y1="0" x2="1" y2=".5"><stop stopColor="#20a2e2" /><stop offset=".6" stopColor="#31c5c7" /><stop offset="1" stopColor="#6de34d" /></linearGradient>
            <linearGradient id="edB" x1="0" y1="0" x2="1" y2="1"><stop stopColor="#1988d9" /><stop offset="1" stopColor="#0b4c9b" /></linearGradient>
          </defs>
          <path d="M0 12Q0 0 12 0t12 9.500q0 6-6 6-5 0-4-2.500 1-1 0-3-2-3.500-7-3-5 .5-7 5z" fill="url(#edA)" />
          <path d="M0 12q1-6 7-6 5 0 7 4-5-.500-5 5 .5 6 8 6 3 0 5-2-3 5-10 5Q0 24 0 12z" fill="url(#edB)" />
          <path d="M10 11q-4 3-2.500 8 1.500 4 5 5 6 0 9.500-5-4 2.500-8 1-4-1.500-4-5.500 0-2 0-3.500z" fill="#0d5bae" />
        </Svg>
      </TaskCell>
      <TaskCell>
        <Svg w={24} h={24}>
          <rect width="24" height="24" rx="3" fill="#fb1325" />
          <path d="M3.500 7.800h9l2.500 8.200 4.500-8.200h-4.200L10.500 16l-2-5.200M4.500 8l2.800 8 2.700-5" stroke="#fff" strokeWidth="1.800" strokeLinejoin="round" />
        </Svg>
      </TaskCell>
      <TaskCell running>
        <Svg w={26} h={26} className="ml-0.5 mt-1">
          <circle cx="12" cy="12" r="12" fill="#fbc116" />
          <path d="M1.600 6Q5 0 12 0t10.400 6H12L8 9z" fill="#e33b2e" /><path d="M1.600 6L7 14.500l5 3L10 24Q3 23 .5 16T1.600 6z" fill="#20a04b" />
          <circle cx="12" cy="12" r="5.600" fill="#fff" /><circle cx="12" cy="12" r="4.400" fill="#2776e5" />
          <circle cx="18" cy="18" r="7.500" fill="#c2185b" />
          <text x="18" y="21" fontSize="9" textAnchor="middle" fill="#fff">K</text>
        </Svg>
      </TaskCell>
      <TaskCell running>
        <Svg w={24} h={24}>
          <path d="M1.500 22.500L3 17Q1.500 14.500 1.500 12A10.600 10.600 0 1 1 12 22.300q-2.500 0-5-1.200z" stroke="#25d366" strokeWidth="2" />
          <path d="M8.500 6.500L10 9.700 9 11q1.500 3 4.500 4.200l1.500-1.500 3 1.500q0 3-3 3Q11 18 8 14.500T6.200 8.500q.8-2.300 2.300-2z" fill="#25d366" />
        </Svg>
      </TaskCell>
      <div className="relative ml-px flex h-full w-12 border-b-2 border-[#ffb9ae] bg-[#5f5955]">
        <Svg w={20} h={25} className="ml-[14px] mt-2">
          <path d="M10 0h9v24h-9z" fill="#d99500" /><path d="M5 6h9v18H5z" fill="#f0c33c" /><path d="M0 12h9v12H0z" fill="#fae28b" /><path d="M9 12h1v12H9z" fill="#dfaf22" />
        </Svg>
        <i className="absolute right-[3px] top-0 h-full w-px bg-[#3b3632]" />
      </div>
      <div className="ml-auto flex h-full items-center">
        <Svg w={26} h={26}>
          <path d="M5 24Q1 24 1 20q0-3.500 4-4 0-6 5.500-6 4 0 5.500 4 1-1 3 0 2 1 2 3 4 0 4 3.500 0 3.500-4 3.500z" fill="#91b9f5" />
          <path d="M1 20q4 2 9 0t14 1q-1 3-4 3H5q-4 0-4-4z" fill="#b5d0f9" />
          <circle cx="18" cy="6.500" r="6" fill="#c4271d" />
          <text x="18" y="10" fontSize="9.500" fontWeight="600" textAnchor="middle" fill="#fff">2</text>
        </Svg>
        <span className="ml-[7px] w-[38px] text-[13.300px] tracking-[-0.050px]">27°C</span>
        <span className="w-[87px] whitespace-nowrap text-[13.300px] tracking-[-0.050px]">Mostly cloudy</span>
        <Svg w={13} h={8} className="ml-6"><path d="M1 7l5.500-5.500L12 7" stroke="#fff" strokeWidth="1.200" /></Svg>
        <div className="ml-[11px] w-[52px] whitespace-nowrap text-center text-[11.700px] leading-[18px] tracking-[-0.280px]">9:54 AM<br />8/6/2025</div>
        <Svg w={26} h={26} className="ml-[17px] mt-1">
          <path d="M1 1h16v13H9l-4 3v-3H1z" fill="#fff" /><path d="M3.500 4.500h11M3.500 7.500h11M3.500 10.500h8" stroke="#333" />
          <circle cx="17" cy="15.500" r="7.800" fill="#333" stroke="#999" />
          <text x="17" y="19.500" fontSize="11" fontWeight="600" textAnchor="middle" fill="#fff">2</text>
        </Svg>
        <i className="ml-[11px] mr-[5px] h-full w-px bg-[#6e6c6b]" />
      </div>
    </div>
  );
}

export default function App() {
  return (
    <div className="flex h-[768px] w-[1366px] flex-col overflow-hidden bg-[#fafafa] font-['Open_Sans','Noto_Sans',sans-serif]">
      <TitleBar />
      <MenuTabs />
      <Ribbon />
      <main className="relative flex min-h-0 flex-1">
        <Rail />
        <div className="flex w-[930px] shrink-0 flex-col bg-white">
          <ReportHeader />
          <Chart />
          <DataTable />
        </div>
        <FiltersPane />
        <VisualizationsPane />
        <DataPane />
        <i className="absolute inset-x-0 top-0 h-[4px] bg-linear-to-b from-black/15 to-transparent" />
      </main>
      <StatusBar />
      <Taskbar />
    </div>
  );
}
